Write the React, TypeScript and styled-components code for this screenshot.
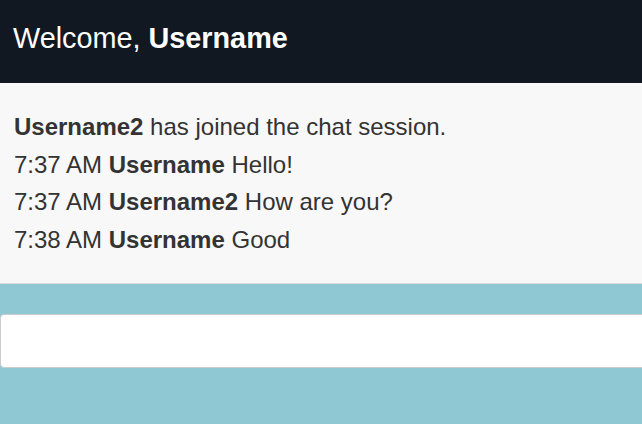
import React from "react";
import styled, { createGlobalStyle } from "styled-components";

const Global = createGlobalStyle`
  html, body { margin: 0; padding: 0; background: #8fc7d3; }
  body { font-family: "Liberation Sans", Arial, sans-serif; overflow: hidden; }
`;

const Page = styled.div`
  width: 642px;
  height: 424px;
  display: flex;
  flex-direction: column;
  background: #8fc7d3;
  overflow: hidden;
`;

const Header = styled.header`
  height: 83px;
  background: #111821;
  color: #fff;
  display: flex;
  align-items: center;
  padding: 0 13px;
  box-sizing: border-box;
`;

const Title = styled.h1`
  margin: 0;
  font-size: 28.8px;
  font-weight: normal;
  line-height: 1;
  padding-bottom: 7px;
`;

const Log = styled.div`
  height: 201px;
  box-sizing: border-box;
  background: #f8f8f8;
  border-bottom: 1px solid #dcdcdc;
  padding: 25px 14px 0;
  color: #333;
`;

const Line = styled.p`
  margin: 0;
  font-size: 24px;
  line-height: 37.7px;
`;

const Composer = styled.div`
  padding-top: 30px;
`;

const Input = styled.input`
  display: block;
  width: 700px;
  height: 54px;
  box-sizing: border-box;
  border: 1px solid #ccc;
  border-radius: 4px;
  background: #fff;
  outline: none;
  margin-left: 0;
`;

const messages = [
  { time: "", user: "Username2", text: "has joined the chat session." },
  { time: "7:37 AM", user: "Username", text: "Hello!" },
  { time: "7:37 AM", user: "Username2", text: "How are you?" },
  { time: "7:38 AM", user: "Username", text: "Good" },
];

export default function App() {
  return (
    <Page>
      <Global />
      <Header>
        <Title>
          Welcome, <b>Username</b>
        </Title>
      </Header>
      <Log>
        {messages.map((m, i) => (
          <Line key={i}>
            {m.time ? `${m.time} ` : ""}
            <b>{m.user}</b> {m.text}
          </Line>
        ))}
      </Log>
      <Composer>
        <Input type="text" />
      </Composer>
    </Page>
  );
}
